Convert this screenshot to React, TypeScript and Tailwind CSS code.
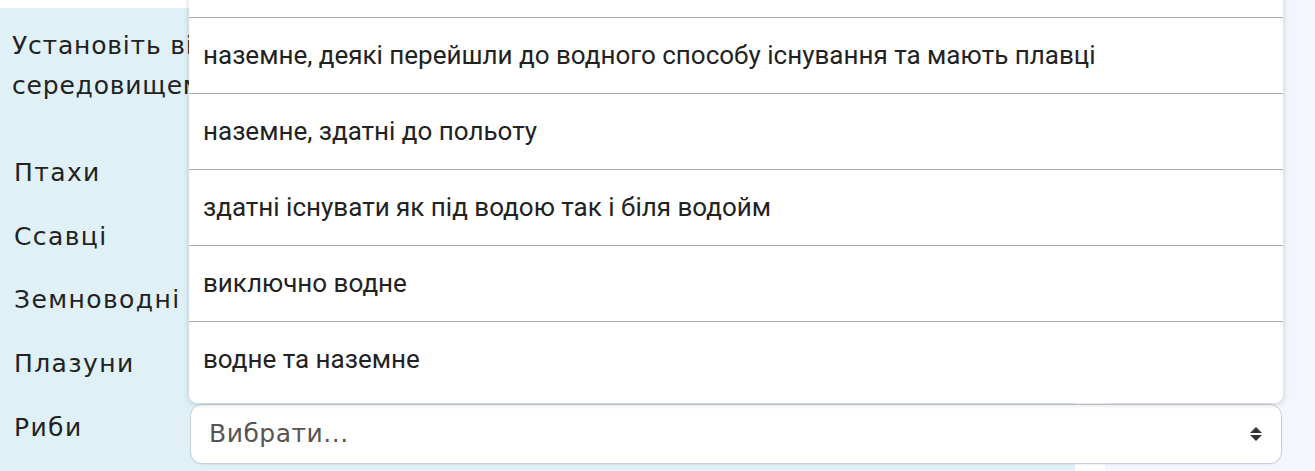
export default function App() {
  const labels = ["Птахи", "Ссавці", "Земноводні", "Плазуни"];
  const options = [
    "виключно наземне",
    "наземне, деякі перейшли до водного способу існування та мають плавці",
    "наземне, здатні до польоту",
    "здатні існувати як під водою так і біля водойм",
    "виключно водне",
    "водне та наземне",
  ];
  const sans = "font-['DejaVu_Sans','Open_Sans',sans-serif]";
  return (
    <div className="relative flex h-[471px] w-[1315px] overflow-hidden bg-[#f3f6fc]">
      <div className="flex w-[1075px] shrink-0 flex-col">
        <div className="h-[8px] bg-white" />
        <div className={`flex-1 bg-[#dff0f7] pl-[12px] pt-[18px] text-[#222] ${sans}`}>
          <p className="whitespace-nowrap text-[25px] leading-[40px] tracking-[0.8px]">
            Установіть відповідність між класом тварин та
            <br />
            середовищем їхнього існування
          </p>
          <div className="mt-[44px] flex flex-col gap-[3.5px] pl-[2px]">
            {labels.map((l) => (
              <div key={l} className="h-[60px] pt-[8px] text-[25px] leading-[30px] tracking-[1.4px]">
                {l}
              </div>
            ))}
            <div className="flex h-[60px]">
              <div className="w-[176px] shrink-0 pt-[9px] text-[25px] leading-[30px] tracking-[1.4px]">Риби</div>
              <div className="relative z-10 flex h-[60px] w-[1092px] shrink-0 items-center justify-between rounded-[12px] border border-[#c9d0da] bg-white pl-[18px] pr-[18px] shadow-[0_1px_2px_rgba(0,0,0,0.06)]">
                <span className="text-[25px] tracking-[0.5px] text-[#555]">Вибрати...</span>
                <svg width="14" height="16" viewBox="0 0 14 16">
                  <polygon points="1,7 7,1 13,7" fill="#333" />
                  <polygon points="1,9 13,9 7,15" fill="#333" />
                </svg>
                <div className="absolute bottom-[60px] left-[-2px] w-[1094px] overflow-hidden rounded-b-[8px] bg-white pb-[6px] shadow-[0_1px_6px_rgba(0,0,0,0.18)] font-['Roboto',sans-serif]">
                  {options.map((o, i) => (
                    <div
                      key={o}
                      className={`flex h-[76px] items-center pl-[14px] text-[26px] text-[#222] ${i > 0 ? "border-t border-[#aaaaaa]" : ""}`}
                    >
                      {o}
                    </div>
                  ))}
                </div>
              </div>
            </div>
          </div>
        </div>
      </div>
      <div className="w-[30px] shrink-0 bg-white" />
    </div>
  );
}
